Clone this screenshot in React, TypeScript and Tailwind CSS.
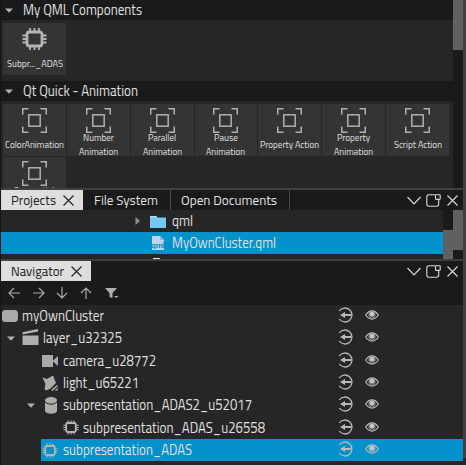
import { useLayoutEffect, useRef, type ReactNode } from 'react';

// Text squeezed horizontally so that it occupies exactly w pixels.
function Label({ w, children, className = '' }: { w: number; children: string; className?: string }) {
  const ref = useRef<HTMLSpanElement>(null);
  useLayoutEffect(() => {
    const el = ref.current;
    if (!el) return;
    el.style.transform = 'none';
    const natural = el.getBoundingClientRect().width;
    el.style.transform = `scaleX(${w / natural})`;
  }, [w, children]);
  return (
    <span className={`block shrink-0 ${className}`} style={{ width: w }}>
      <span ref={ref} className="inline-block origin-left whitespace-pre">{children}</span>
    </span>
  );
}

function Chip({ className = '' }: { className?: string }) {
  return (
    <svg className={`shrink-0 ${className}`} viewBox="0 0 25 22" fill="none" stroke="#b4b4b4">
      <rect x="5" y="4" width="15" height="14" rx="2.500" strokeWidth="2.800" />
      <path d="M8 0v4M12.5 0v4M17 0v4M8 18v4M12.5 18v4M17 18v4M0.5 7.500H5M0.5 11H5M0.5 14.500H5M20 7.500h4.500M20 11h4.500M20 14.500h4.500" strokeWidth="1.800" />
    </svg>
  );
}

function Frame() {
  return (
    <svg className="h-[25px] w-[25px] shrink-0" viewBox="0 0 25 25" fill="none" stroke="#b0b0b0" strokeWidth="1.500">
      <path d="M.75 6.500V.75h5.750M18.500.75h5.750v5.750M24.250 18.500v5.750h-5.750M6.500 24.250H.75v-5.750" />
      <rect x="6.800" y="6.800" width="11.400" height="11.400" />
    </svg>
  );
}

function Arrow({ className = '' }: { className?: string }) {
  return (
    <svg className={`h-[5px] w-2 shrink-0 ${className}`} viewBox="0 0 8 5"><path d="M0 .5h8L4 4.700z" fill="#b2b2b2" /></svg>
  );
}

function Cross({ className = '' }: { className?: string }) {
  return (
    <svg className={`h-[11px] w-[11px] shrink-0 ${className}`} viewBox="0 0 11 11" fill="none" stroke="currentColor" strokeWidth="1.200">
      <path d="M.5.5l10 10M10.500.5l-10 10" />
    </svg>
  );
}

function PanelButtons() {
  return (
    <div className="ml-auto mr-[5px] flex items-center text-[#d8d8d8]">
      <svg className="mr-[5px] h-[9px] w-[14px]" viewBox="0 0 14 9" fill="none" stroke="currentColor" strokeWidth="1.200"><path d="M.5 1L7 7.800 13.500 1" /></svg>
      <svg className="mr-[6px] h-[13px] w-[15px]" viewBox="0 0 15 13" fill="none" stroke="currentColor" strokeWidth="1.100">
        <path d="M9 .8H3A2.200 2.200 0 00.8 3v7A2.200 2.200 0 003 12.200h7.500a2.200 2.200 0 002.200-2.200V6" />
        <rect x="9.500" y=".7" width="4.700" height="4.700" rx=".6" />
      </svg>
      <Cross />
    </div>
  );
}

function SectionHeader({ title, w }: { title: string; w: number }) {
  return (
    <div className="flex h-full items-center bg-[#1a1a1a] pl-[4px]">
      <Arrow />
      <Label w={w} className="ml-[10px] text-[14.500px] leading-5">{title}</Label>
    </div>
  );
}

function Tile({ lines, widths }: { lines: string[]; widths: number[] }) {
  const two = lines.length > 1;
  return (
    <div className="flex h-[52px] flex-col items-center bg-[#343434] pt-1">
      <Frame />
      <div className={`flex flex-col items-center text-[10px] leading-[14px] ${two ? '-mt-[2px]' : 'mt-[5px]'}`}>
        {lines.map((l, i) => <Label key={l} w={widths[i]}>{l}</Label>)}
      </div>
    </div>
  );
}

const tiles: { lines: string[]; widths: number[] }[] = [
  { lines: ['ColorAnimation'], widths: [59] },
  { lines: ['Number', 'Animation'], widths: [31, 39] },
  { lines: ['Parallel', 'Animation'], widths: [28, 39] },
  { lines: ['Pause', 'Animation'], widths: [24, 39] },
  { lines: ['Property Action'], widths: [59] },
  { lines: ['Property', 'Animation'], widths: [33, 39] },
  { lines: ['Script Action'], widths: [48] },
  { lines: ['Sequential'], widths: [40] },
];

function ExportIcon() {
  return (
    <svg className="h-4 w-4 shrink-0" viewBox="0 0 16 16" fill="none" stroke="#b9b9b9">
      <path d="M1.200 4A7 7 0 111.200 12" strokeWidth="1.300" />
      <path d="M5 8h8" strokeWidth="2" /><path d="M2 8l5-3v6z" fill="#b9b9b9" stroke="none" />
    </svg>
  );
}

function EyeIcon() {
  return (
    <svg className="h-[10px] w-[14px] shrink-0" viewBox="0 0 14 10" fill="none" stroke="#b9b9b9" strokeWidth="1.200">
      <path d="M.6 5Q3.500.9 7 .9T13.400 5Q10.500 9.100 7 9.100T.6 5z" />
      <circle cx="7" cy="5" r="3.200" strokeWidth=".7" /><circle cx="7" cy="4.200" r="2.500" fill="#c4c4c4" stroke="none" />
    </svg>
  );
}

const RootIcon = () => <svg className="h-3 w-4 shrink-0" viewBox="0 0 16 12"><rect width="16" height="12" rx="3.500" fill="#aaa" /></svg>;
const LayerIcon = () => (
  <svg className="-mt-[3px] h-4 w-[17px] shrink-0" viewBox="0 0 17 16" fill="#b0b0b0"><path d="M.5 6.500h16V16H.5zM.3 3.200L15.800 0l.5 2.400L.8 5.500z" /></svg>
);
const CameraIcon = () => (
  <svg className="h-3 w-4 shrink-0" viewBox="0 0 16 12" fill="#aaa"><path d="M0 0h11v12H0zM10.500 6L16 1v10z" /></svg>
);
const LightIcon = () => (
  <svg className="h-[17px] w-[17px] shrink-0" viewBox="0 0 17 17" fill="#adadad"><path d="M.3 2.500L5 4l6-3.500L14 8l-5.500 5.500L4 15.500 2.500 14l1-5zM9 15l6-5 .8 1.300-5.300 4.700zM12.500 16l3.500-3.500-.5 3z" /></svg>
);
const CylinderIcon = () => (
  <svg className="h-[17px] w-3 shrink-0" viewBox="0 0 12 17" fill="#adadad"><ellipse cx="6" cy="3.300" rx="6" ry="3.300" /><path d="M0 5.500q6 4.500 12 0V14q-1 2.700-6 2.700T0 14z" /></svg>
);

type Node = { name: string; w: number; pad: string; gap: string; icon: ReactNode; open?: boolean; selected?: boolean };
const nodes: Node[] = [
  { name: 'myOwnCluster', w: 82, pad: 'pl-[1px]', gap: 'ml-1', icon: <RootIcon /> },
  { name: 'layer_u32325', w: 79, pad: 'pl-[6px]', gap: 'ml-1', icon: <LayerIcon />, open: true },
  { name: 'camera_u28772', w: 93, pad: 'pl-[41px]', gap: 'ml-[5px]', icon: <CameraIcon /> },
  { name: 'light_u65221', w: 76, pad: 'pl-[41px]', gap: 'ml-1', icon: <LightIcon /> },
  { name: 'subpresentation_ADAS2_u52017', w: 189, pad: 'pl-[26px]', gap: 'ml-[6px]', icon: <CylinderIcon />, open: true },
  { name: 'subpresentation_ADAS_u26558', w: 182, pad: 'pl-[62px]', gap: 'ml-1', icon: <Chip className="h-[15px] w-4" /> },
  { name: 'subpresentation_ADAS', w: 129, pad: 'pl-[1px]', gap: 'ml-[5px]', icon: <Chip className="h-[15px] w-4" />, selected: true },
];

function NavRow({ node }: { node: Node }) {
  return (
    <div className={`flex h-[22.33px] items-center ${node.selected ? 'ml-[40px] bg-[#0591c9]' : ''}`}>
      <div className={`flex flex-1 items-center ${node.pad}`}>
        {node.open && <Arrow className={node.w > 100 ? 'mr-[10px]' : 'mr-[7px]'} />}
        {node.icon}
        <Label w={node.w} className={`text-[14.500px] leading-5 ${node.gap}`}>{node.name}</Label>
      </div>
      <div className="mr-[84px] flex w-[41px] items-center justify-between pb-[2px]"><ExportIcon /><EyeIcon /></div>
    </div>
  );
}

export default function App() {
  return (
    <div className="flex h-[465px] w-[466px] overflow-hidden border-l border-[#151515] bg-[#262626] font-['Titillium_Web','Roboto',sans-serif] text-[#e0e0e0]">
      <div className="flex w-[462px] shrink-0 flex-col">
        <section className="flex h-[188px] shrink-0">
          <div className="w-[452px] overflow-hidden">
            <div className="h-5"><SectionHeader title="My QML Components" w={119} /></div>
            <div className="h-[61px] pl-[2px] pt-[3px]">
              <div className="flex h-[52px] w-[63px] flex-col items-center bg-[#343434] pt-[5px]">
                <Chip className="h-[22px] w-[25px]" />
                <Label w={56} className="mt-[7px] text-[10px] leading-[14px]">Subpr..._ADAS</Label>
              </div>
            </div>
            <div className="h-5"><SectionHeader title="Qt Quick - Animation" w={115} /></div>
            <div className="grid w-[448px] grid-cols-7 gap-px pl-[2px] pt-[3px]">
              {tiles.slice(0, 7).map((t, i) => <Tile key={i} {...t} />)}
              <div className="flex h-[52px] flex-col items-center bg-[#343434] pt-1">
                <Frame />
                <Label w={40} className="-mt-[2px] text-[10px] leading-[14px]">{tiles[7].lines[0]}</Label>
              </div>
            </div>
          </div>
          <div className="flex-1 bg-[#1a1a1a]"><div className="h-[50px] bg-[#606062]" /></div>
        </section>

        <section className="flex h-[71px] shrink-0 flex-col">
          <div className="flex h-[22px] shrink-0 items-center border-t-2 border-[#404040] bg-[#1a1a1a] text-[13.500px]">
            <div className="flex h-full w-[82px] items-center bg-[#dedede] pl-[10px] text-[#222]"><Label w={45}>Projects</Label><Cross className="ml-[7px]" /></div>
            <Label w={64} className="ml-[11px]">File System</Label>
            <div className="ml-[12px] flex h-full w-[120px] items-center border-x border-[#4a4a4a] pl-[10px]"><Label w={96}>Open Documents</Label></div>
            <PanelButtons />
          </div>
          <div className="flex h-[49px]">
            <div className="w-[442px] overflow-hidden text-[14.500px]">
              <div className="flex h-[22px] items-center pl-[134px]">
                <svg className="h-2 w-[5px]" viewBox="0 0 5 8"><path d="M.5 0v8L5 4z" fill="#8d8d8d" /></svg>
                <svg className="ml-[10px] h-[13px] w-[16px]" viewBox="0 0 16 13"><path d="M0 1h6l1.500 1.500H16V13H0z" fill="#73c9f4" /><path d="M0 1h6l1.500 1.500H0z" fill="#a4ddfa" /></svg>
                <Label w={21} className="ml-[6px] leading-5">qml</Label>
              </div>
              <div className="flex h-[22px] items-center bg-[#0591c9] pl-[150px]">
                <svg className="h-4 w-[15px]" viewBox="0 0 15 16"><path d="M1 1h8l4 4v10H1z" fill="#bcd6ee" /><path d="M9 1l4 4H9z" fill="#85b8dc" /><text x="0" y="12.500" fontSize="8" fontWeight="700" fill="#0787be" fontFamily="Roboto, sans-serif" textLength="14" lengthAdjust="spacingAndGlyphs">qml</text></svg>
                <Label w={104} className="ml-[6px] leading-5">MyOwnCluster.qml</Label>
              </div>
              <div className="ml-[152px] mt-1 h-4 w-[7px] bg-[#e5e5e5]" />
            </div>
            <div className="w-[10px] bg-[#606062]"><div className="h-5 bg-[#1a1a1a]" /></div>
            <div className="w-[10px] bg-[#1a1a1a]"><div className="h-10 bg-[#606062]" /></div>
          </div>
        </section>

        <section className="flex flex-1 flex-col">
          <div className="flex h-[22px] shrink-0 items-center border-t-2 border-[#404040] bg-[#1a1a1a] text-[13.500px]">
            <div className="flex h-full w-[90px] items-center bg-[#dedede] pl-[10px] text-[#222]"><Label w={53}>Navigator</Label><Cross className="ml-[7px]" /></div>
            <PanelButtons />
          </div>
          <div className="h-6 shrink-0 bg-[#1a1a1a] pl-[7px] pt-[5px]">
            <svg className="h-[14px] w-[112px]" viewBox="0 0 112 14" fill="none" stroke="#a8a8a8" strokeWidth="1.200">
              <path d="M12 7H1m5-5L1 7l5 5M25 7h11m-5-5 5 5-5 5M54 1v11m-5-5 5 5 5-5M78 13V2m-5 5 5-5 5 5" />
              <path d="M97 2h12l-4.500 5v5l-3-1V7zM106 10h4.500l-2.250 2z" fill="#b0b0b0" stroke="none" />
            </svg>
          </div>
          <div>{nodes.map((n) => <NavRow key={n.name} node={n} />)}</div>
        </section>
      </div>
      <div className="h-[458px] w-[3px] shrink-0 bg-[#404042]" />
    </div>
  );
}
